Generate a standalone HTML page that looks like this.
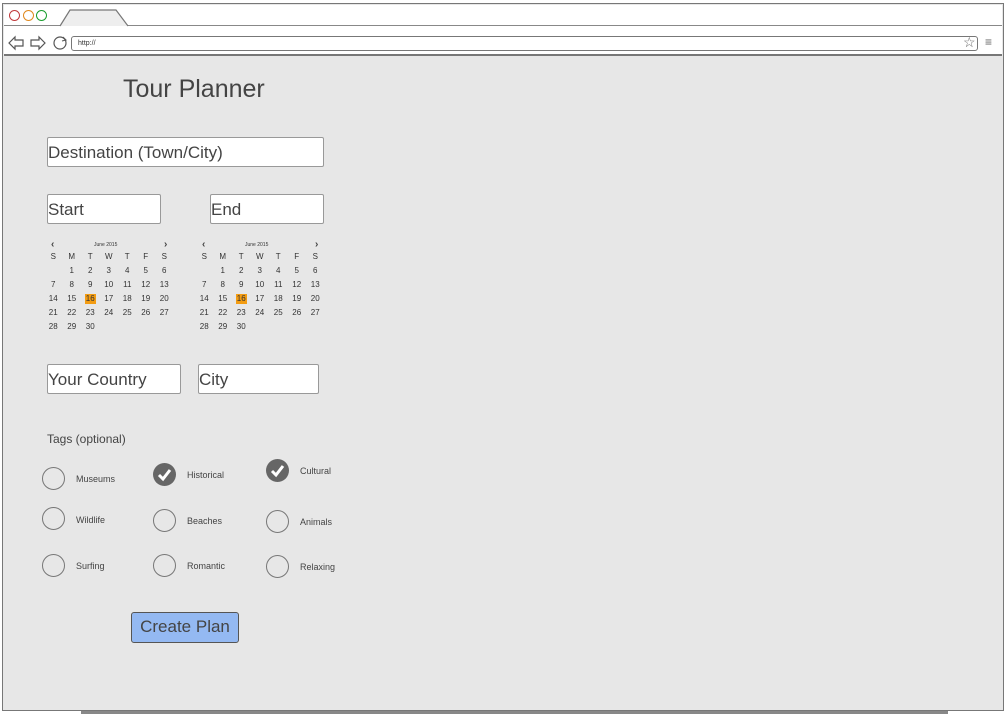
<!DOCTYPE html>
<html><head><meta charset="utf-8"><style>
*{margin:0;padding:0;box-sizing:border-box}
body{width:1006px;height:715px;background:#fff;position:relative;overflow:hidden;font-family:"Liberation Sans",sans-serif;color:#444}
.a{position:absolute}
.inp{position:absolute;border:1px solid #999;background:#fff;font-size:17px;color:#444;padding:5px 0 0 0;border-radius:2px;line-height:20px}
.cal{position:absolute;display:grid;grid-template-columns:repeat(7,18.5px);grid-auto-rows:14px;font-size:8px;text-align:center;line-height:14px;color:#333}
.hd{position:absolute;font-size:5px;color:#333}
.arr{position:absolute;font-size:10px;font-weight:bold;color:#444}
.hl{background:#f39c12;display:inline-block;line-height:10px;padding:0 1px}
.c{position:absolute;width:23px;height:23px;border:1.5px solid #777;border-radius:50%}
.ck{position:absolute;width:23px;height:23px;border-radius:50%;background:#666}
.lb{position:absolute;font-size:9px;color:#444}
</style></head><body>
<div class="a" style="left:2px;top:3px;width:1002px;height:708px;border:1.5px solid #777;background:#e7e7e7"></div>
<div class="a" style="left:4px;top:5px;width:998px;height:51px;background:#fff;border-bottom:2px solid #777"></div>
<div class="a" style="left:4px;top:25px;width:998px;height:1px;background:#888"></div>
<div class="a" style="left:9px;top:10px;width:11px;height:11px;border:1.5px solid #c0393b;border-radius:50%"></div>
<div class="a" style="left:23px;top:10px;width:11px;height:11px;border:1.5px solid #e08a1e;border-radius:50%"></div>
<div class="a" style="left:36px;top:10px;width:11px;height:11px;border:1.5px solid #1a9e2e;border-radius:50%"></div>
<svg class="a" style="left:58px;top:9px" width="72" height="18"><path d="M2 17 L12 1 L58 1 L70 17" fill="#eee" stroke="#777" stroke-width="1.2"/></svg>
<svg class="a" style="left:7px;top:35px" width="60" height="18">
<path d="M2 8 L8 2 L8 5 L16 5 L16 11 L8 11 L8 14 Z" fill="#fff" stroke="#555" stroke-width="1.2"/>
<path d="M38 8 L32 2 L32 5 L24 5 L24 11 L32 11 L32 14 Z" fill="#fff" stroke="#555" stroke-width="1.2"/>
<circle cx="53" cy="8" r="6" fill="none" stroke="#555" stroke-width="1.2"/><path d="M56 2 L59 5 L55 6" fill="none" stroke="#555"/>
</svg>
<div class="a" style="left:71px;top:36px;width:907px;height:15px;border:1px solid #777;border-radius:3px;background:#fff;font-size:7px;line-height:14px;padding-left:6px;color:#333">http://</div>
<div class="a" style="left:963px;top:34px;font-size:14px;color:#666">☆</div>
<div class="a" style="left:985px;top:35px;font-size:12px;color:#666">≡</div>
<div class="a" style="left:81px;top:711px;width:867px;height:3px;background:#888"></div>

<div class="a" style="left:123px;top:75px;font-size:25px;color:#444">Tour Planner</div>
<div class="inp" style="left:47px;top:137px;width:277px;height:30px">Destination (Town/City)</div>
<div class="inp" style="left:47px;top:194px;width:114px;height:30px">Start</div>
<div class="inp" style="left:210px;top:194px;width:114px;height:30px">End</div>

<div class="arr" style="left:51px;top:239px">‹</div><div class="hd" style="left:94px;top:242px">June 2015</div><div class="arr" style="left:164px;top:239px">›</div>
<div class="arr" style="left:202px;top:239px">‹</div><div class="hd" style="left:245px;top:242px">June 2015</div><div class="arr" style="left:315px;top:239px">›</div>
<div class="cal" style="left:44px;top:250px">
<span>S</span><span>M</span><span>T</span><span>W</span><span>T</span><span>F</span><span>S</span>
<span></span><span>1</span><span>2</span><span>3</span><span>4</span><span>5</span><span>6</span>
<span>7</span><span>8</span><span>9</span><span>10</span><span>11</span><span>12</span><span>13</span>
<span>14</span><span>15</span><span><i class="hl" style="font-style:normal">16</i></span><span>17</span><span>18</span><span>19</span><span>20</span>
<span>21</span><span>22</span><span>23</span><span>24</span><span>25</span><span>26</span><span>27</span>
<span>28</span><span>29</span><span>30</span></div>
<div class="cal" style="left:195px;top:250px">
<span>S</span><span>M</span><span>T</span><span>W</span><span>T</span><span>F</span><span>S</span>
<span></span><span>1</span><span>2</span><span>3</span><span>4</span><span>5</span><span>6</span>
<span>7</span><span>8</span><span>9</span><span>10</span><span>11</span><span>12</span><span>13</span>
<span>14</span><span>15</span><span><i class="hl" style="font-style:normal">16</i></span><span>17</span><span>18</span><span>19</span><span>20</span>
<span>21</span><span>22</span><span>23</span><span>24</span><span>25</span><span>26</span><span>27</span>
<span>28</span><span>29</span><span>30</span></div>

<div class="inp" style="left:47px;top:364px;width:134px;height:30px">Your Country</div>
<div class="inp" style="left:198px;top:364px;width:121px;height:30px">City</div>

<div class="a" style="left:47px;top:432px;font-size:12px;color:#444">Tags (optional)</div>

<div class="c" style="left:42px;top:467px"></div><div class="lb" style="left:76px;top:474px">Museums</div>
<div class="ck" style="left:153px;top:463px"><svg width="23" height="23"><path d="M6 12 L10 16 L17 7" fill="none" stroke="#fff" stroke-width="3"/></svg></div><div class="lb" style="left:187px;top:470px">Historical</div>
<div class="ck" style="left:266px;top:459px"><svg width="23" height="23"><path d="M6 12 L10 16 L17 7" fill="none" stroke="#fff" stroke-width="3"/></svg></div><div class="lb" style="left:300px;top:466px">Cultural</div>

<div class="c" style="left:42px;top:507px"></div><div class="lb" style="left:76px;top:515px">Wildlife</div>
<div class="c" style="left:153px;top:509px"></div><div class="lb" style="left:187px;top:516px">Beaches</div>
<div class="c" style="left:266px;top:510px"></div><div class="lb" style="left:300px;top:517px">Animals</div>

<div class="c" style="left:42px;top:554px"></div><div class="lb" style="left:76px;top:561px">Surfing</div>
<div class="c" style="left:153px;top:554px"></div><div class="lb" style="left:187px;top:561px">Romantic</div>
<div class="c" style="left:266px;top:555px"></div><div class="lb" style="left:300px;top:562px">Relaxing</div>

<div class="a" style="left:131px;top:612px;width:108px;height:31px;background:#94b9f2;border:1.5px solid #555;border-radius:3px;font-size:17px;line-height:28px;text-align:center;color:#444">Create Plan</div>
</body></html>
